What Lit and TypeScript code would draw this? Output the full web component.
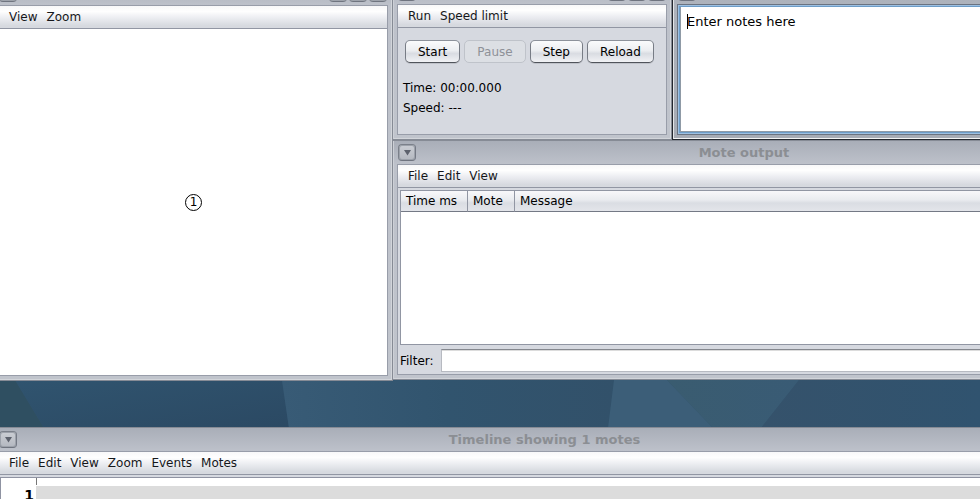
import { LitElement, html, css, nothing } from "lit";
import { customElement, property } from "lit/decorators.js";

const controls = css`
  * {
    box-sizing: border-box;
  }
  button,
  input,
  textarea,
  table {
    font: inherit;
    color: inherit;
  }
`;

@customElement("desktop-window")
class DesktopWindow extends LitElement {
  @property() heading = "";
  @property({ type: Array }) menus: string[] = [];
  @property({ type: Boolean, reflect: true }) active = false;

  static styles = [
    controls,
    css`
      :host {
        box-sizing: border-box;
        display: flex;
        flex-direction: column;
        padding: 0 4px 4px;
        border: 1px solid #868b95;
        background: linear-gradient(#a9aeb8, #bdc1ca 23px, #c0c4cc);
        box-shadow: inset 1px 0 #cdd0d6, inset -1px -1px #d2d5da;
      }
      :host([active]) {
        border-color: #23272e;
        background: linear-gradient(#a9aeb8, #aeb3bc 23px, #a6abb4);
        box-shadow: inset 1px 0 #e4e6e8, inset 0 -1px #f2f3f4;
      }
      .title {
        flex: none;
        display: grid;
        grid-template-columns: 58px 1fr 58px;
        align-items: center;
        height: 23px;
        padding: 0 1px;
      }
      .heading {
        text-align: center;
        font-size: 13px;
        font-weight: bold;
        line-height: 20px;
        color: #8b8e93;
        white-space: nowrap;
        margin: 0;
      }
      .group {
        display: flex;
        gap: 2px;
      }
      .tool {
        display: grid;
        place-items: center;
        width: 18px;
        height: 17px;
        padding: 0;
        border: 1px solid;
        border-color: #7b808a #747984 #6f747f #7b808a;
        border-radius: 4px;
        background: linear-gradient(#cbced4, #b4b8c0);
        box-shadow: inset 0 0 0 1px #9da2ab;
      }
      .body {
        flex: 1;
        min-height: 0;
        display: flex;
        flex-direction: column;
        border: 1px solid #989da9;
        background: #d6d9e0;
      }
      :host([active]) .body {
        border-color: #6b7380;
      }
      .menubar {
        flex: none;
        display: flex;
        align-items: center;
        gap: 9px;
        height: 23px;
        padding: 0 10px;
        border-bottom: 1px solid #9196a3;
        background: linear-gradient(#f8f8f9, #fefefe 25%, #eeeff3 50%, #d6d9df 90%);
      }
      .menu {
        padding: 0;
        border: 0;
        background: none;
        line-height: 16px;
        color: #15171a;
      }
    `,
  ];

  private tool(label: string, path: string) {
    return html`<button class="tool" aria-label=${label}>
      <svg width="9" height="9" viewBox="0 0 9 9"><path d=${path} fill="#5d626d" /></svg>
    </button>`;
  }

  render() {
    return html`
      <header class="title">
        <div class="group">${this.tool("Window menu", "M1 2H8L4.500 7.500Z")}</div>
        <h2 class="heading">${this.heading}</h2>
        <div class="group">
          ${this.tool("Minimize", "M1 6H8V8H1Z")} ${this.tool("Maximize", "M1 1H8V8H1ZM2 3V7H7V3Z")}
          ${this.tool("Close", "M1 2L2 1L8 7L7 8ZM7 1L8 2L2 8L1 7Z")}
        </div>
      </header>
      <div class="body">
        ${this.menus.length
          ? html`<nav class="menubar">
              ${this.menus.map((m) => html`<button class="menu">${m}</button>`)}
            </nav>`
          : nothing}
        <slot></slot>
      </div>
    `;
  }
}

@customElement("app-root")
class AppRoot extends LitElement {
  static styles = [
    controls,
    css`
      :host {
        display: block;
        position: relative;
        min-height: 100vh;
        overflow: hidden;
        background: #31536d;
        font: 12px/16px "DejaVu Sans", sans-serif;
        color: #000;
      }
      .wallpaper {
        position: absolute;
        top: 380px;
        left: 0;
        width: 100%;
        height: 48px;
      }
      desktop-window {
        position: absolute;
      }
      .network {
        left: -7px;
        top: -19px;
        width: 400px;
        height: 400px;
      }
      .control {
        left: 392px;
        top: -20px;
        width: 280px;
        height: 160px;
      }
      .notes {
        left: 672px;
        right: -116px;
        top: -20px;
        height: 160px;
      }
      .output {
        left: 392px;
        right: -116px;
        top: 140px;
        height: 240px;
      }
      .timeline {
        left: -7px;
        right: -116px;
        top: 427px;
        height: 160px;
      }
      .canvas {
        flex: 1;
        position: relative;
        background: #fff;
      }
      .mote {
        position: absolute;
        left: 186px;
        top: 165px;
        display: grid;
        place-items: center;
        width: 17px;
        height: 17px;
        border: 1px solid #000;
        border-radius: 50%;
        line-height: 15px;
      }
      .actions {
        display: flex;
        gap: 4px;
        padding: 12px 7px 15px;
      }
      .action {
        height: 23px;
        padding: 0 12px;
        border: 1px solid;
        border-color: #8d929b #777c85 #50545b #777c85;
        border-radius: 5px;
        background: linear-gradient(#fafbfc, #eceef1 45%, #d9dce2 60%, #f1f2f5);
        box-shadow: 0 1px #bfc2c9;
      }
      .action:disabled {
        border-color: #bfc3ca;
        background: #dcdfe4;
        box-shadow: none;
        color: #8e9198;
      }
      .status {
        margin: 0;
        padding: 0 5px;
        line-height: 20px;
      }
      .editor {
        flex: 1;
        position: relative;
        display: flex;
        border: 1px solid #9dc0e2;
        background: #6d9dc8;
        padding: 1px;
      }
      .text {
        flex: 1;
        margin: 0;
        padding: 6px;
        border: 1px solid #8f9aa6;
        border-top: 0;
        outline: 0;
        resize: none;
        background: #fff;
        font-size: 13px;
        line-height: 18px;
      }
      .caret {
        position: absolute;
        left: 8px;
        top: 8px;
        width: 1px;
        height: 15px;
        background: #000;
      }
      .log {
        flex: 1;
        margin: 2px;
        border: 1px solid #9196a3;
        background: #fff;
      }
      .table {
        width: 100%;
        table-layout: fixed;
        border-collapse: separate;
        border-spacing: 0;
      }
      .time {
        width: 67px;
      }
      .id {
        width: 47px;
      }
      .head {
        height: 21px;
        padding: 0 5px;
        border-right: 1px solid #9196a3;
        border-bottom: 1px solid #747985;
        background: linear-gradient(#f8f8fa, #e9ebef 45%, #dadde3 60%, #e3e5ea);
        font-weight: normal;
        text-align: left;
        white-space: nowrap;
      }
      .filter {
        display: flex;
        align-items: center;
        gap: 7px;
        padding: 2px;
      }
      .field {
        flex: 1;
        height: 23px;
        padding: 0 6px;
        border: 1px solid #b7bac1;
        border-top-color: #85888e;
        border-radius: 0;
        outline: 0;
        background: #fff;
        box-shadow: inset 0 1px #dcdcdc;
      }
      .tracks {
        flex: 1;
        display: grid;
        grid-template-columns: 35px 1fr;
        grid-template-rows: 8px 1fr;
        margin: 2px 1px 1px;
        border: 1px solid #8f93a2;
        background: #fff;
      }
      .label {
        grid-row: 1 / 3;
        padding: 8px 2px;
        text-align: right;
        font-size: 14px;
        line-height: 18px;
        font-weight: bold;
      }
      .ruler {
        width: 1px;
        height: 7px;
        background: #777;
      }
      .track {
        background: #dcdcdc;
      }
    `,
  ];

  render() {
    return html`
      <svg class="wallpaper" viewBox="0 0 980 48" preserveAspectRatio="none" aria-hidden="true">
        <defs>
          <linearGradient id="deep" x1="0" y1="0" x2="1" y2="1">
            <stop offset="0" stop-color="#30546f" />
            <stop offset="1" stop-color="#2b4963" />
          </linearGradient>
          <linearGradient id="mid" x1="0" y1="0" x2="1" y2="0">
            <stop offset="0" stop-color="#385b76" />
            <stop offset="0.500" stop-color="#31546e" />
            <stop offset="1" stop-color="#32516a" />
          </linearGradient>
          <linearGradient id="end" x1="0" y1="0" x2="1" y2="0">
            <stop offset="0" stop-color="#35526b" />
            <stop offset="1" stop-color="#30536f" />
          </linearGradient>
          <linearGradient id="wedge" x1="0" y1="0" x2="1" y2="0">
            <stop offset="0" stop-color="#3a5c70" />
            <stop offset="1" stop-color="#395b75" />
          </linearGradient>
        </defs>
        <path d="M0 0H15L44 48H0Z" fill="#2f4f61" />
        <path d="M15 0H282L289 48H44Z" fill="url(#deep)" />
        <path d="M282 0H614L608 48H289Z" fill="url(#mid)" />
        <path d="M614 0H667L713 48H608Z" fill="#3c5e78" />
        <path d="M667 0H799L761 48H713Z" fill="url(#wedge)" />
        <path d="M799 0H980V48H761Z" fill="url(#end)" />
      </svg>

      <desktop-window class="network" .menus=${["View", "Zoom"]}>
        <div class="canvas"><span class="mote">1</span></div>
      </desktop-window>

      <desktop-window class="control" .menus=${["Run", "Speed limit"]}>
        <div class="actions">
          <button class="action">Start</button>
          <button class="action" disabled>Pause</button>
          <button class="action">Step</button>
          <button class="action">Reload</button>
        </div>
        <p class="status">Time: 00:00.000</p>
        <p class="status">Speed: ---</p>
      </desktop-window>

      <desktop-window class="output" heading="Mote output" .menus=${["File", "Edit", "View"]}>
        <div class="log">
          <table class="table">
            <thead>
              <tr>
                <th class="head time">Time ms</th>
                <th class="head id">Mote</th>
                <th class="head">Message</th>
              </tr>
            </thead>
          </table>
        </div>
        <div class="filter">
          <label for="filter">Filter:</label>
          <input class="field" id="filter" type="text" />
        </div>
      </desktop-window>

      <desktop-window class="notes" active>
        <div class="editor">
          <textarea class="text" aria-label="Notes" spellcheck="false" .value=${"Enter notes here"}></textarea>
          <span class="caret"></span>
        </div>
      </desktop-window>

      <desktop-window
        class="timeline"
        heading="Timeline showing 1 motes"
        .menus=${["File", "Edit", "View", "Zoom", "Events", "Motes"]}
      >
        <div class="tracks">
          <span class="label">1</span>
          <span class="ruler"></span>
          <div class="track"></div>
        </div>
      </desktop-window>
    `;
  }
}
